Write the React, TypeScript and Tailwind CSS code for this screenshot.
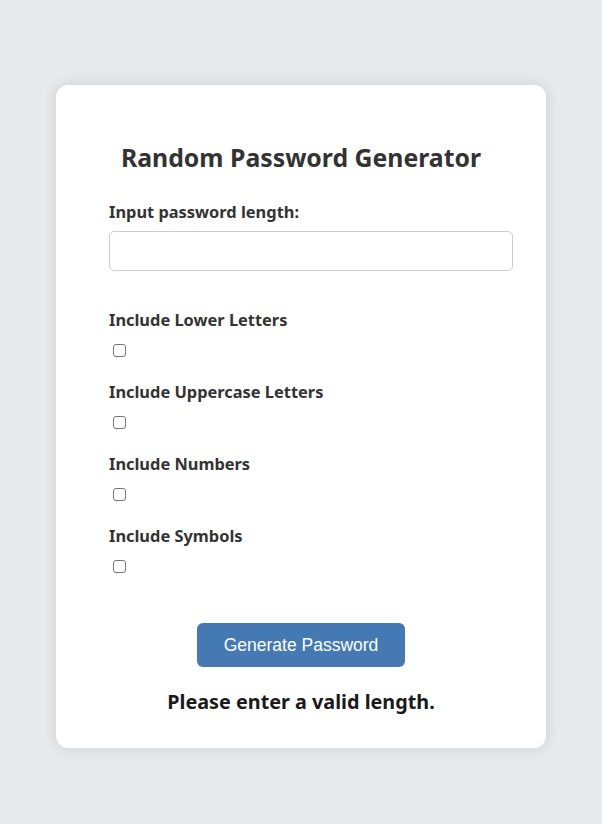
const options = [
  "Include Lower Letters",
  "Include Uppercase Letters",
  "Include Numbers",
  "Include Symbols",
];

function OptionRow({ label, first }: { label: string; first: boolean }) {
  return (
    <div className={first ? "mt-[37px]" : "mt-[23px]"}>
      <label className="block text-[16.4px] leading-[24px] font-bold text-[#333]">{label}</label>
      <input
        type="checkbox"
        className="block mt-[12px] ml-[4px] w-[13px] h-[13px] appearance-none rounded-[3px] border border-[#767676] bg-white"
      />
    </div>
  );
}

export default function App() {
  return (
    <div className="min-h-[824px] w-full bg-[#e7eaed] pt-[85px] font-['Noto_Sans',sans-serif]">
      <div className="mx-auto w-[490px] h-[663px] rounded-[12px] bg-white shadow-[0_0_14px_rgba(0,0,0,0.12)] pt-[56px] px-[53px]">
        <h1 className="text-center text-[24.8px] leading-[32px] font-bold text-[#333]">
          Random Password Generator
        </h1>
        <label className="block mt-[27px] text-[16.4px] leading-[24px] font-bold text-[#333]">
          Input password length:
        </label>
        <input
          type="number"
          className="block mt-[7px] w-[404px] h-[40px] rounded-[5px] border border-[#ccc] bg-white px-[10px] outline-none"
        />
        {options.map((o, i) => (
          <OptionRow key={o} label={o} first={i === 0} />
        ))}
        <div className="mt-[50px] flex justify-center">
          <button className="w-[208px] h-[44px] rounded-[6px] bg-[#4479b4] text-white text-[17.5px] font-['Liberation_Sans',Arial,sans-serif]">
            Generate Password
          </button>
        </div>
        <p className="mt-[23px] text-center text-[19.8px] leading-[24px] font-bold text-[#1a1a1a]">
          Please enter a valid length.
        </p>
      </div>
    </div>
  );
}
